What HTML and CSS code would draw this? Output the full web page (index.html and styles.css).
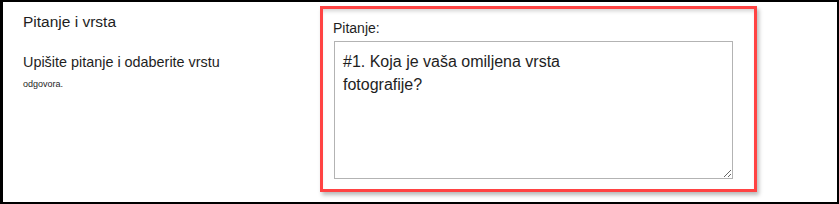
FILE: index.html
```html
<!DOCTYPE html>
<html lang="hr">
<head>
<meta charset="utf-8">
<title>Pitanje i vrsta</title>
<link rel="stylesheet" href="styles.css">
</head>
<body>
<div class="frame">
  <div class="intro">
    <h2 class="intro-title">Pitanje i vrsta</h2>
    <p class="intro-desc">Upišite pitanje i odaberite vrstu</p>
    <p class="intro-small">odgovora.</p>
  </div>
  <div class="field">
    <label class="field-label" for="q">Pitanje:</label>
    <textarea class="field-input" id="q">#1. Koja je vaša omiljena vrsta
fotografije?</textarea>
  </div>
</div>
</body>
</html>
```
FILE: styles.css
```css
html, body {
  margin: 0;
  padding: 0;
  background: #ffffff;
}

.frame {
  box-sizing: border-box;
  width: 839px;
  height: 204px;
  border: 2px solid #000000;
  border-left-width: 3px;
  background: #ffffff;
  display: flex;
  align-items: flex-start;
  font-family: "Liberation Sans", Arial, sans-serif;
  color: #1e1e1e;
}

.intro {
  box-sizing: border-box;
  width: 317px;
  padding: 11px 0 0 20px;
}

.intro-title {
  margin: 0;
  font-size: 15.5px;
  font-weight: normal;
  line-height: 18px;
}

.intro-desc {
  margin: 23px 0 0 0;
  font-size: 14.4px;
  line-height: 17px;
}

.intro-small {
  margin: 8px 0 0 0;
  font-size: 9px;
  line-height: 11px;
}

.field {
  box-sizing: border-box;
  width: 437px;
  height: 186px;
  margin-top: 4px;
  padding: 11px 21px 10px 10px;
  border: 3px solid #ff4343;
  box-shadow: 2px 3px 4px rgba(0, 0, 0, 0.28), inset 0 4px 4px -2px rgba(0, 0, 0, 0.18);
  display: flex;
  flex-direction: column;
}

.field-label {
  display: block;
  font-size: 14px;
  line-height: 16px;
  margin-bottom: 5px;
}

.field-input {
  box-sizing: border-box;
  width: 399px;
  height: 138px;
  margin: 0 0 0 1px;
  padding: 8px 8px;
  border: 1px solid #b3b3b3;
  border-radius: 0;
  font-family: "Liberation Sans", Arial, sans-serif;
  font-size: 16px;
  line-height: 23px;
  color: #1e1e1e;
  background: #ffffff;
  resize: both;
  outline: none;
  overflow: hidden;
}
```
